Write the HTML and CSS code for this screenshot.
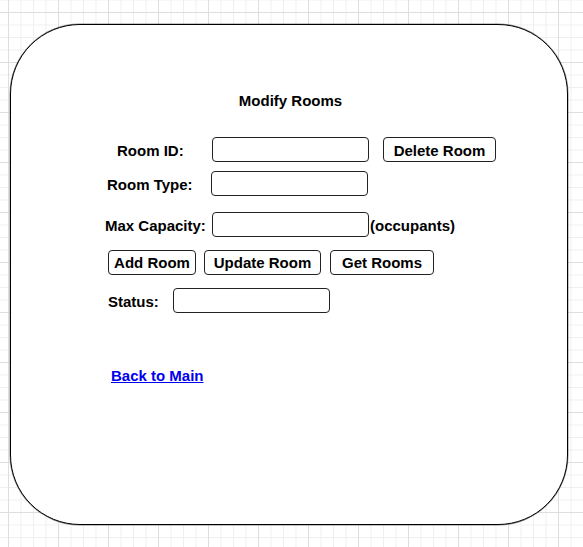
FILE: index.html
```html
<!DOCTYPE html>
<html>
<head>
<meta charset="utf-8">
<title>Modify Rooms</title>
<link rel="stylesheet" href="styles.css">
</head>
<body>
<div class="card">
  <div class="title">Modify Rooms</div>
  <div class="row row-id">
    <span class="label lbl-id">Room ID:</span>
    <span class="field"></span>
    <span class="btn btn-delete">Delete Room</span>
  </div>
  <div class="row row-type">
    <span class="label lbl-type">Room Type:</span>
    <span class="field"></span>
  </div>
  <div class="row row-cap">
    <span class="label lbl-cap">Max Capacity:</span>
    <span class="field"></span>
    <span class="label unit">(occupants)</span>
  </div>
  <div class="row row-btns">
    <span class="btn btn-add">Add Room</span>
    <span class="btn btn-update">Update Room</span>
    <span class="btn btn-get">Get Rooms</span>
  </div>
  <div class="row row-status">
    <span class="label lbl-status">Status:</span>
    <span class="field"></span>
  </div>
  <a class="back" href="#">Back to Main</a>
</div>
</body>
</html>
```

FILE: styles.css
```css
html, body {
  margin: 0;
  padding: 0;
}
body {
  width: 583px;
  height: 547px;
  overflow: hidden;
  font-family: "Liberation Sans", Arial, sans-serif;
  font-weight: bold;
  font-size: 15px;
  color: #000;
  background-color: #fff;
  background-image:
    linear-gradient(to right, #dedede 1px, transparent 1px),
    linear-gradient(to bottom, #dedede 1px, transparent 1px),
    linear-gradient(to right, #efefef 1px, transparent 1px),
    linear-gradient(to bottom, #efefef 1px, transparent 1px);
  background-size: 50px 50px, 50px 50px, 12.5px 12.5px, 12.5px 12.5px;
  background-position: 8px 12px, 8px 12px, 8px 12px, 8px 12px;
}
.card {
  box-sizing: border-box;
  margin: 24px 0 0 10px;
  width: 558px;
  height: 501px;
  border: 1px solid #000;
  border-radius: 70px;
  background: #fff;
  padding-top: 67px;
  box-shadow: 0 0 0 0.5px rgba(0, 0, 0, 0.45);
}
.title {
  text-align: center;
  line-height: 18px;
  height: 18px;
  padding-left: 3px;
}
.row {
  display: flex;
  align-items: center;
  height: 25px;
}
.label {
  padding-top: 3px;
  line-height: 18px;
  white-space: nowrap;
}
.field {
  box-sizing: border-box;
  width: 157px;
  height: 25px;
  border: 1px solid #222;
  border-radius: 4px;
  background: #fff;
}
.btn {
  box-sizing: border-box;
  height: 25px;
  border: 1px solid #222;
  border-radius: 4px;
  background: #fff;
  display: flex;
  align-items: center;
  justify-content: center;
  padding-top: 1px;
  line-height: 18px;
  white-space: nowrap;
}
.row-id { margin-top: 27px; margin-left: 106px; }
.lbl-id { width: 95px; }
.btn-delete { width: 113px; margin-left: 14px; padding-top: 3px; }

.row-type { margin-top: 9px; margin-left: 96px; }
.lbl-type { width: 104px; }

.row-cap { margin-top: 16px; margin-left: 94px; }
.lbl-cap { width: 107px; }
.unit { margin-left: 1px; }

.row-btns { margin-top: 13px; margin-left: 97px; }
.btn-add { width: 88px; }
.btn-update { width: 117px; margin-left: 8px; }
.btn-get { width: 104px; margin-left: 9px; }

.row-status { margin-top: 13px; margin-left: 97px; }
.lbl-status { width: 65px; }

.back {
  display: inline-block;
  margin-top: 54px;
  margin-left: 100px;
  line-height: 18px;
  color: #0000ee;
  text-decoration: underline;
}
```
